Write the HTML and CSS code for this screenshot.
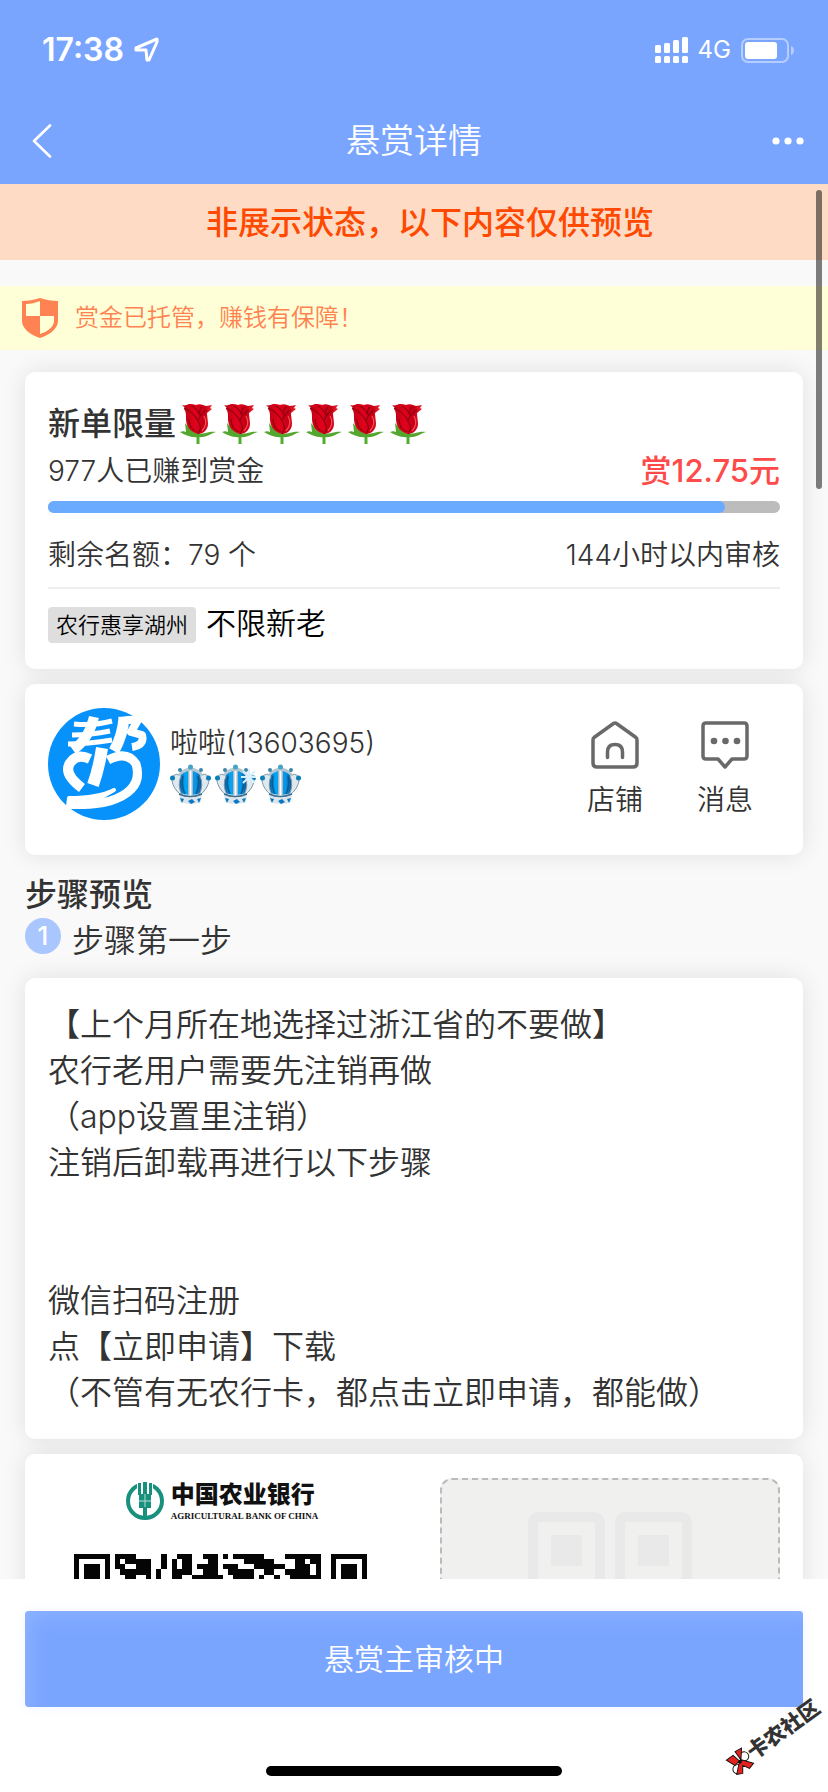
FILE: index.html
```html
<!DOCTYPE html>
<html lang="zh-CN">
<head>
<meta charset="utf-8">
<meta name="viewport" content="width=device-width, initial-scale=1">
<title>悬赏详情</title>
<link rel="stylesheet" href="styles.css">
</head>
<body>
<svg class="defs" aria-hidden="true">
  <defs>
    <linearGradient id="petal" x1="0" x2="1"><stop offset="0" stop-color="#b80414"/><stop offset=".45" stop-color="#e3001b"/><stop offset=".75" stop-color="#c30016"/><stop offset="1" stop-color="#f2232f"/></linearGradient>
    <linearGradient id="gem" x1="0" x2="1"><stop offset="0" stop-color="#0a3f74"/><stop offset=".3" stop-color="#05a5f4"/><stop offset=".7" stop-color="#0795e8"/><stop offset="1" stop-color="#0b3c70"/></linearGradient>
    <linearGradient id="silver" x1="0" x2="1"><stop offset="0" stop-color="#8fa9b8"/><stop offset=".5" stop-color="#fff"/><stop offset="1" stop-color="#8fa3b3"/></linearGradient>
    <symbol id="rose" viewBox="0 0 36 41">
      <path d="M16.500 29h3v11h-3z" fill="#4fae2a"/>
      <path d="M18 33C11 34 5 31 0 28c3-1 4-1 6 0L5 19c3 3 5 7 13 11 8 0 11-3 18-2-5 1-9 6-18 5z" fill="#55a630"/>
      <path d="M2 1c2 1 5 0 7-1 3 0 5 0 7 1 2-1 5-1 7 0l3 1 6-1-2 3 2 1-5 4c0 4 1 7 1 11 0 6-5 10-10 10C10 28 6 22 6 15c0-5 0-8-2-10l1-1z" fill="url(#petal)"/>
      <path d="M4 4c7 3 11 7 14 13 2-6 4-9 9-11M12 2c4 2 6 5 8 9M18 17c3 4 3 9 0 13M9 15c0 6 3 11 8 13M22 3c-2 2-3 4-2 6" fill="none" stroke="#8e0011" stroke-width="1.200"/>
      <path d="M24 12c3 5 2 11-2 15" fill="none" stroke="#ff4c50" stroke-width="1.200"/>
    </symbol>
    <symbol id="crown" viewBox="0 0 41 41">
      <path d="M8 14C10 8 15 6 20.500 5 26 6 31 8 33 14q2 8-2 15-10 4-21 0-4-7-2-15z" fill="url(#gem)"/>
      <path d="M10 30C6 27 1 20 2 13q5-5 9-1-4 9 1 19zM31 30c4-3 9-10 8-17q-5-5-9-1 4 9-1 19z" fill="#dfe8ee" stroke="#7e98a8" stroke-width="1"/>
      <path d="M13 12q-2 9 2 18M28 12q2 9-2 18" fill="none" stroke="#0b5a93" stroke-width="1.500"/>
      <path d="M18 6h5v25h-5z" fill="url(#silver)"/>
      <path d="M9 12C11 7 16 6 20.500 5c4.500 1 9.500 2 11.500 7" fill="none" stroke="#b3c7d2" stroke-width="3"/>
      <circle cx="20.500" cy="3" r="2.500" fill="#44a3c8"/>
      <circle cx="10" cy="6" r="2" fill="#3f86a8"/><circle cx="31" cy="6" r="2" fill="#3f86a8"/>
      <circle cx="2.500" cy="14" r="2.500" fill="#087fb5"/><circle cx="38.500" cy="14" r="2.500" fill="#087fb5"/>
      <path d="M9 30q11 4 23 0l-1 8q-10 4-21 0z" fill="#dbe5eb"/>
      <path d="M9 30q11 5 23 0" fill="none" stroke="#3b6f92" stroke-width="1.500"/>
      <path d="M10 34l4 1-2 4zM18 37l4-2 3 3-4 2zM31 34l-4 1 2 4z" fill="#0879c5"/>
    </symbol>
  </defs>
</svg>

<div class="screen">
  <header class="top">
    <div class="status">
      <div class="status-side">
        <time class="clock">17:38</time>
        <svg class="locate" viewBox="0 0 26 26" aria-hidden="true"><path d="M23 2 2 11v2h10l1 10h2l8-18z" fill="none" stroke="#fff" stroke-width="3" stroke-linejoin="round"/></svg>
      </div>
      <div class="status-side">
        <svg class="signal" viewBox="0 0 33 26" aria-hidden="true"><g fill="#fff"><rect y="8" width="6" height="8" rx="1.500"/><rect x="9" y="6" width="6" height="10" rx="1.500"/><rect x="18" y="3" width="6" height="13" rx="1.500"/><rect x="27" width="6" height="16" rx="1.500"/><rect y="19" width="6" height="7" rx="1.500"/><rect x="9" y="19" width="6" height="7" rx="1.500"/><rect x="18" y="19" width="6" height="7" rx="1.500"/><rect x="27" y="19" width="6" height="7" rx="1.500"/></g></svg>
        <span class="network">4G</span>
        <svg class="battery" viewBox="0 0 53 25" aria-hidden="true"><rect x="1" y="1" width="46" height="23" rx="6" fill="none" stroke="#b5ceff" stroke-width="2"/><rect x="4" y="4" width="32" height="17" rx="3" fill="#fff"/><path d="M50 8q3 1 3 4.500T50 17z" fill="#b5ceff"/></svg>
      </div>
    </div>
    <nav class="nav">
      <button class="nav-btn" type="button" aria-label="返回"><svg class="back" viewBox="0 0 20 34"><path d="M18 1.500 2 17l16 15.500" fill="none" stroke="#fff" stroke-width="2.600" stroke-linecap="round" stroke-linejoin="round"/></svg></button>
      <h1 class="nav-title">悬赏详情</h1>
      <button class="nav-btn nav-more" type="button" aria-label="更多"><svg class="more" viewBox="0 0 32 8"><g fill="#fff"><circle cx="4" cy="4" r="3.600"/><circle cx="16" cy="4" r="3.600"/><circle cx="28" cy="4" r="3.600"/></g></svg></button>
    </nav>
  </header>

  <div class="viewport">
    <main class="scroll">
      <p class="alert">非展示状态，以下内容仅供预览</p>
      <p class="escrow">
        <svg class="shield" viewBox="0 0 36 40" aria-hidden="true"><path d="M18 0c6 2 12 3 18 3v20c0 8-9 14-18 17C9 37 0 31 0 23V3c6 0 12-1 18-3z" fill="#ff8352"/><path d="M4 6c5 0 9-1 14-3v15H4zM18 18h14v5c0 6-7 11-14 13z" fill="#feffd6"/></svg>
        <span>赏金已托管，赚钱有保障！</span>
      </p>

      <div class="content">
        <section class="card">
          <h2 class="task-title">新单限量<span class="roses" role="img" aria-label="六朵玫瑰"><svg class="rose"><use href="#rose"/></svg><svg class="rose"><use href="#rose"/></svg><svg class="rose"><use href="#rose"/></svg><svg class="rose"><use href="#rose"/></svg><svg class="rose"><use href="#rose"/></svg><svg class="rose"><use href="#rose"/></svg></span></h2>
          <div class="row earned"><span>977人已赚到赏金</span><strong class="price">赏12.75元</strong></div>
          <div class="track"><div class="fill" style="width:92.5%"></div></div>
          <div class="row quota"><span>剩余名额：79 个</span><span>144小时以内审核</span></div>
          <div class="tags"><span class="tag">农行惠享湖州</span><span class="limit">不限新老</span></div>
        </section>

        <section class="card owner">
          <svg class="avatar" viewBox="0 0 112 112" role="img" aria-label="帮">
            <circle cx="56" cy="56" r="56" fill="#0792fb"/>
            <g fill="none" stroke="#fff" stroke-linejoin="round">
              <path d="M26 16Q46 18 64 13M24 27Q43 27 62 23" stroke-width="5"/>
              <path d="M20 36Q40 36 64 32" stroke-width="5"/>
              <path d="M46 9Q41 31 25 42" stroke-width="10"/>
              <path d="M76 9Q75 27 66 43" stroke-width="11"/>
              <path d="M73 13Q84 11 90 12L83 24 94 27Q97 37 84 39" stroke-width="8"/>
              <path d="M54 40Q51 60 45 77" stroke-width="12"/>
              <path d="M34 80Q15 66 22 55Q29 45 42 51" stroke-width="10"/>
              <path d="M60 52Q79 42 88 56Q96 82 62 93Q43 98 23 96" stroke-width="9"/>
              <path d="M21 90Q50 90 66 82L36 99 20 99Z" stroke-width="4" fill="#fff"/>
            </g>
          </svg>
          <div class="who">
            <span class="name">啦啦(13603695)</span>
            <span class="crowns" role="img" aria-label="三皇冠"><svg class="crown"><use href="#crown"/></svg><svg class="crown" viewBox="0 0 41 41"><use href="#crown" width="41" height="41"/><path d="M34 5v16M26 13h16M28 7l12 12M40 7L28 19" stroke="#d8f0ff" stroke-width="2"/></svg><svg class="crown"><use href="#crown"/></svg></span>
          </div>
          <button class="action" type="button">
            <svg class="action-icon" viewBox="0 0 48 48" aria-hidden="true"><g fill="none" stroke="#696969" stroke-width="3.500" stroke-linecap="round" stroke-linejoin="round"><path d="M22.500 2.500 3 16.500Q2 17 2 19v23q0 4 4 4h36q4 0 4-4V19q0-2-1-2.500L25.500 2.500q-1.500-1-3 0z"/><path d="M16.500 36.500V31q0-7.500 7.500-7.500t7.500 7.500v5.500"/></g></svg>
            <span>店铺</span>
          </button>
          <button class="action" type="button">
            <svg class="action-icon" viewBox="0 0 48 48" aria-hidden="true"><path d="M5 2h38q3 0 3 3v30q0 3-3 3H31l-7 8-7-8H5q-3 0-3-3V5q0-3 3-3z" fill="none" stroke="#696969" stroke-width="3.500" stroke-linejoin="round"/><g fill="#696969"><circle cx="13" cy="20" r="3.300"/><circle cx="24.500" cy="20" r="3.300"/><circle cx="36" cy="20" r="3.300"/></g></svg>
            <span>消息</span>
          </button>
        </section>

        <h2 class="steps-title">步骤预览</h2>
        <div class="step"><span class="step-no">1</span><span class="step-name">步骤第一步</span></div>

        <section class="card desc">【上个月所在地选择过浙江省的不要做】
农行老用户需要先注销再做
（app设置里注销）
注销后卸载再进行以下步骤


微信扫码注册
点【立即申请】下载
（不管有无农行卡，都点击立即申请，都能做）</section>

        <section class="card images">
          <figure class="shot">
            <figcaption class="bank">
              <svg class="bank-logo" viewBox="0 0 38 38" aria-hidden="true"><circle cx="19" cy="19" r="17" fill="none" stroke="#17917d" stroke-width="4"/><path d="M11 0h16v10H11z" fill="#fff"/><g fill="#17917d"><path d="M17 0h4v12h-4zM13 12h12v14h-4v10h-4V26h-4zM12 1h3v12h-3zM23 1h3v12h-3z"/></g><path d="M13 19h12M19 12v13" stroke="#b5ddd5" stroke-width="1"/></svg>
              <span class="bank-name"><span class="bank-cn">中国农业银行</span><span class="bank-en">AGRICULTURAL BANK OF CHINA</span></span>
            </figcaption>
            <svg class="qr" viewBox="0 0 57 57" role="img" aria-label="二维码" shape-rendering="crispEdges"><path d="M0 0h7v1H0zM8 0h1v1H8zM9 0h3v1H9zM17 0h1v1h-1zM20 0h3v1h-3zM25 0h3v1h-3zM29 0h1v1h-1zM31 0h6v1h-6zM41 0h7v1h-7zM50 0h7v1h-7zM0 1h1v1H0zM6 1h1v1H6zM8 1h1v1H8zM10 1h5v1h-5zM17 1h1v1h-1zM19 1h1v1h-1zM21 1h2v1h-2zM26 1h2v1h-2zM33 1h6v1h-6zM43 1h2v1h-2zM46 1h2v1h-2zM50 1h1v1h-1zM56 1h1v1h-1zM0 2h1v1H0zM2 2h3v1H2zM6 2h1v1H6zM8 2h2v1H8zM12 2h3v1h-3zM17 2h1v1h-1zM19 2h1v1h-1zM21 2h2v1h-2zM24 2h4v1h-4zM29 2h3v1h-3zM35 2h6v1h-6zM43 2h3v1h-3zM47 2h1v1h-1zM50 2h1v1h-1zM52 2h3v1h-3zM56 2h1v1h-1zM0 3h1v1H0zM2 3h3v1H2zM6 3h1v1H6zM9 3h6v1H9zM16 3h1v1h-1zM19 3h4v1h-4zM25 3h3v1h-3zM30 3h5v1h-5zM37 3h2v1h-2zM41 3h5v1h-5zM47 3h1v1h-1zM50 3h1v1h-1zM52 3h3v1h-3zM56 3h1v1h-1zM0 4h1v3H0zM2 4h3v1H2zM6 4h1v3H6zM10 4h2v1h-2zM14 4h1v1h-1zM16 4h1v1h-1zM19 4h2v1h-2zM23 4h6v1h-6zM31 4h4v1h-4zM36 4h1v1h-1zM39 4h1v1h-1zM42 4h6v1h-6zM50 4h1v3h-1zM52 4h3v1h-3zM56 4h1v3h-1z" fill="#050505"/></svg>
          </figure>
          <div class="slot">
            <svg class="placeholder" viewBox="0 0 164 164" aria-hidden="true"><g fill="none" stroke="#e9e9e9" stroke-width="10"><rect x="5" y="5" width="67" height="67" rx="6"/><rect x="92" y="5" width="67" height="67" rx="6"/><rect x="5" y="92" width="67" height="67" rx="6"/></g><g fill="#e9e9e9"><rect x="23" y="23" width="31" height="31"/><rect x="110" y="23" width="31" height="31"/><rect x="23" y="110" width="31" height="31"/></g></svg>
          </div>
        </section>
      </div>
    </main>
    <div class="thumb" aria-hidden="true"></div>
  </div>

  <footer class="bottom">
    <button class="submit" type="button">悬赏主审核中</button>
    <div class="home"></div>
    <div class="mark">
      <svg class="mark-logo" viewBox="0 0 26 26" aria-hidden="true"><g stroke="#111" stroke-width="1"><ellipse cx="6" cy="18" rx="5" ry="5" fill="#fff"/><ellipse cx="20" cy="11" rx="5" ry="5" fill="#fff"/><path d="M2 3h9l2 9-7 1zM15 1l8 1-8 10zM12 13h4l8 10-7 2-4-7-5 7-6-3z" fill="#e4231e"/></g><circle cx="13" cy="13" r="2" fill="#111"/></svg>
      <span>卡农社区</span>
    </div>
  </footer>
</div>
</body>
</html>
```
FILE: styles.css
```css
* { box-sizing: border-box; }

body {
  margin: 0;
  background: #f9f9f9;
  color: #333;
  font-family: Inter, "Noto Sans CJK SC", sans-serif;
  font-size: 28px;
  font-weight: 350;
  line-height: 40px;
}

h1, h2, p, figure { margin: 0; }

button {
  border: 0;
  padding: 0;
  background: none;
  color: inherit;
  font: inherit;
}

svg { display: block; }

.defs { position: absolute; width: 0; height: 0; }

.screen {
  display: flex;
  flex-direction: column;
  height: 100vh;
}

/* Header */
.top { background: #7aa5ff; color: #fff; }

.status {
  display: flex;
  justify-content: space-between;
  align-items: center;
  padding: 30px 34px 0 42px;
}

.status-side { display: flex; align-items: center; gap: 10px; }
.clock { font-size: 32px; font-weight: 600; }
.locate { width: 26px; height: 26px; }
.signal { width: 33px; height: 26px; }
.network { font-size: 24px; font-weight: 400; }
.battery { width: 53px; height: 25px; }

.nav {
  display: grid;
  grid-template-columns: 1fr auto 1fr;
  align-items: center;
  height: 114px;
  padding: 28px 24px 0;
}

.nav-btn { justify-self: start; padding-left: 8px; }
.nav-more { justify-self: end; }
.back { width: 20px; height: 34px; }
.more { width: 32px; height: 8px; }
.nav-title { font-size: 34px; font-weight: 350; line-height: 48px; }

/* Scrolling area */
.viewport { position: relative; flex: 1; min-height: 0; }
.scroll { height: 100%; overflow-y: auto; scrollbar-width: none; }

.thumb {
  position: absolute;
  top: 6px;
  right: 6px;
  width: 6px;
  height: 299px;
  border-radius: 3px;
  background: rgba(0, 0, 0, .5);
}

.alert {
  padding: 15px 0 13px 32px;
  background: #fddbc5;
  color: #ff4800;
  font-size: 32px;
  font-weight: 500;
  line-height: 48px;
  text-align: center;
}

.escrow {
  display: flex;
  align-items: center;
  gap: 17px;
  margin-top: 26px;
  padding: 12px 22px;
  background: #feffd6;
  color: #ff8352;
  font-size: 24px;
}

.shield { width: 36px; height: 40px; }

.content { padding: 22px 25px; }

.card {
  padding: 24px 23px;
  border-radius: 10px;
  background: #fff;
  box-shadow: 0 0 24px rgba(0, 0, 0, .1);
}

.card + .card { margin-top: 15px; }

/* Task summary */
.task-title {
  display: flex;
  align-items: center;
  font-size: 32px;
  font-weight: 500;
  line-height: 56px;
}

.roses { display: flex; gap: 6px; padding-left: 4px; }
.rose { width: 36px; height: 41px; }

.row { display: flex; justify-content: space-between; }
.earned { line-height: 38px; }
.price { color: #ff4a4a; font-size: 31px; font-weight: 500; }

.track {
  margin-top: 11px;
  height: 12px;
  border-radius: 6px;
  background: #bcbcbc;
}

.fill { height: 100%; border-radius: 6px; background: #6aabff; }

.quota { margin-top: 22px; padding-bottom: 12px; border-bottom: 2px solid #eee; }

.tags {
  display: flex;
  align-items: flex-end;
  gap: 10px;
  margin-top: 14px;
  padding-bottom: 2px;
  color: #000;
}

.tag {
  padding: 0 8px;
  border-radius: 4px;
  background: #dedede;
  font-size: 22px;
  line-height: 36px;
}

.limit { font-size: 30px; }

/* Publisher */
.owner { display: flex; padding-bottom: 35px; }
.avatar { width: 112px; height: 112px; }
.who { flex: 1; padding: 14px 0 0 10px; }
.name { display: block; line-height: 42px; }
.crowns { display: flex; gap: 4px; }
.crown { width: 41px; height: 41px; }

.action {
  display: flex;
  flex-direction: column;
  align-items: center;
  gap: 11px;
  width: 110px;
  padding-top: 13px;
}

.action-icon { width: 48px; height: 48px; }

/* Steps */
.steps-title {
  margin-top: 17px;
  font-size: 32px;
  font-weight: 500;
  line-height: 46px;
}

.step { display: flex; align-items: flex-start; gap: 11px; margin-bottom: 14px; }

.step-no {
  width: 36px;
  height: 36px;
  border-radius: 50%;
  background: #aac6ff;
  color: #fff;
  font-size: 26px;
  font-weight: 500;
  line-height: 36px;
  text-align: center;
}

.step-name { font-size: 32px; line-height: 46px; }

.desc {
  padding-bottom: 23px;
  font-size: 32px;
  line-height: 46px;
  white-space: pre-line;
}

.images { display: flex; justify-content: space-between; }

.shot {
  display: flex;
  flex-direction: column;
  align-items: center;
  gap: 32px;
  width: 344px;
}

.bank { display: flex; gap: 7px; padding: 4px 0 0 4px; color: #111; }
.bank-logo { width: 38px; height: 38px; }
.bank-name { display: flex; flex-direction: column; gap: 2px; }
.bank-cn { font-size: 24px; font-weight: 900; line-height: 26px; }
.bank-en { font-family: "Liberation Serif", serif; font-size: 9px; font-weight: 700; line-height: 12px; }
.qr { width: 293px; height: 293px; }

.slot {
  width: 340px;
  height: 380px;
  padding: 32px 86px;
  border: 2px dashed #bbb;
  border-radius: 12px;
  background: #f0f0ee;
}

.placeholder { width: 164px; height: 164px; }

/* Bottom bar */
.bottom {
  position: relative;
  padding: 32px 25px 16px;
  background: #fff;
}

.submit {
  width: 100%;
  border-radius: 4px;
  background: #7aa5ff;
  box-shadow: inset 12px 12px 24px -12px #94b6ff, 0 0 12px rgba(122, 165, 255, .12);
  color: #fff;
  font-size: 30px;
  line-height: 96px;
}

.home {
  width: 296px;
  height: 10px;
  margin: 59px auto 0;
  border-radius: 5px;
  background: #000;
}

.mark {
  position: absolute;
  right: 0;
  bottom: 42px;
  display: flex;
  align-items: center;
  color: #333;
  font-size: 21px;
  font-weight: 900;
  line-height: 26px;
  transform: rotate(-36deg);
}

.mark-logo { width: 24px; height: 24px; }
```
